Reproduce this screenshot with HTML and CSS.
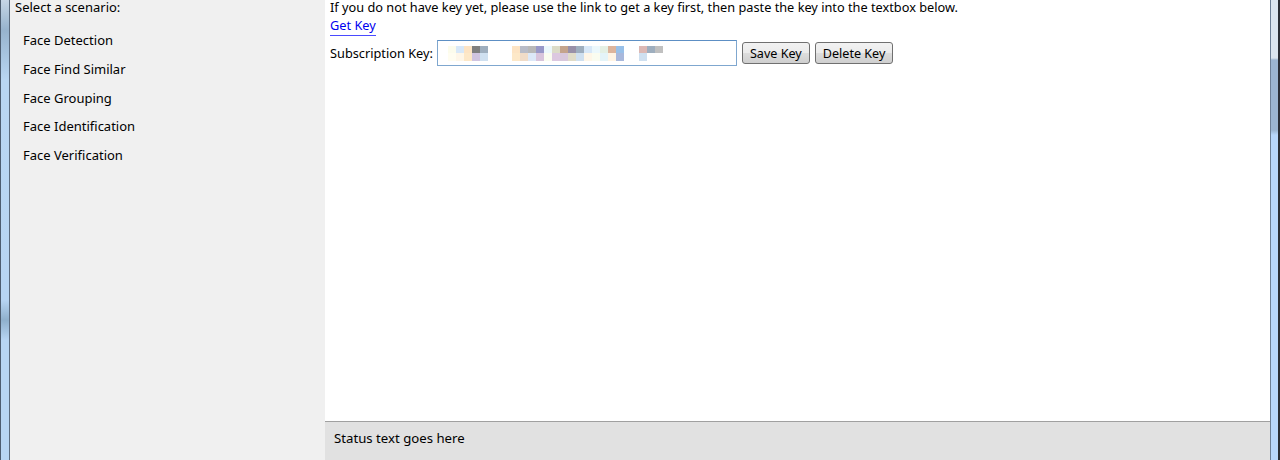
FILE: index.html
```html
<!DOCTYPE html>
<html>
<head>
<meta charset="utf-8">
<link rel="stylesheet" href="styles.css">
</head>
<body>
<div class="window">
  <div class="frame frame-left"></div>
  <aside class="sidebar">
    <div class="sidebar-title">Select a scenario:</div>
    <ul class="scenarios">
      <li>Face Detection</li>
      <li>Face Find Similar</li>
      <li>Face Grouping</li>
      <li>Face Identification</li>
      <li>Face Verification</li>
    </ul>
  </aside>
  <main class="main">
    <section class="content">
      <p class="intro">If you do not have key yet, please use the link to get a key first, then paste the key into the textbox below.</p>
      <a class="get-key" href="#">Get Key</a>
      <div class="key-row">
        <label class="key-label">Subscription Key:</label>
        <div class="key-box">
          <div class="blur">
            <span class="px c1"></span><span class="px c2"></span><span class="px c3"></span><span class="px c4"></span><span class="px c5"></span>
            <span class="gap"></span>
            <span class="px c3"></span><span class="px c6"></span><span class="px c7"></span><span class="px c8"></span><span class="px c9"></span><span class="px c10"></span><span class="px c11"></span><span class="px c12"></span><span class="px c5"></span><span class="px c2"></span><span class="px c9"></span><span class="px c13"></span><span class="px c14"></span><span class="px c15"></span>
            <span class="gap2"></span>
            <span class="px c16"></span><span class="px c5b"></span><span class="px c17"></span>
          </div>
        </div>
        <button class="btn">Save Key</button>
        <button class="btn">Delete Key</button>
      </div>
    </section>
    <footer class="status">Status text goes here</footer>
  </main>
  <div class="frame frame-right"></div>
</div>
</body>
</html>
```

FILE: styles.css
```css
html, body {
  margin: 0;
  padding: 0;
  height: 460px;
  overflow: hidden;
}
body {
  font-family: "Noto Sans", "DejaVu Sans", sans-serif;
  font-size: 13px;
  color: #000;
}
.window {
  display: flex;
  height: 460px;
  width: 1280px;
}
.frame {
  flex: none;
}
.frame-left {
  width: 8px;
  border-left: 1px solid #4d5d70;
  border-right: 1px solid #5b6b7e;
  background: linear-gradient(to bottom, #c6d6e6 0px, #97b3cd 30px, #b9d6f2 80px, #b7d5f3 300px, #8fb0cc 320px, #b7d5f3 340px, #b7d5f3 460px);
}
.frame-right {
  width: 7px;
  border-left: 1px solid #6d8096;
  border-right: 2px solid #2a2f36;
  background: linear-gradient(to bottom, #dbe6f0 0px, #dbe6f0 58px, #9bb5d0 60px, #9bb5d0 130px, #b7d7fb 135px, #b7d7fb 460px);
}
.sidebar {
  flex: none;
  width: 315px;
  background: #f0f0f0;
  padding: 0 0 0 5px;
  box-sizing: border-box;
}
.sidebar-title {
  margin-top: 0;
  line-height: 14px;
  font-size: 13px;
}
.scenarios {
  list-style: none;
  margin: 0;
  padding: 18px 0 0 8px;
}
.scenarios li {
  font-size: 13px;
  line-height: 17px;
  height: 28.75px;
}
.main {
  flex: 1;
  display: flex;
  flex-direction: column;
  background: #fff;
}
.content {
  flex: 1;
  padding: 0 5px;
}
.intro {
  margin: 0;
  font-size: 12.75px;
  line-height: 15px;
}
.get-key {
  display: inline-block;
  color: #0000f0;
  text-decoration: none;
  font-size: 12.75px;
  line-height: 16px;
  margin-top: 2px;
  padding-bottom: 2px;
  border-bottom: 1px solid #4a4aff;
}
.key-row {
  display: flex;
  align-items: center;
  margin-top: 4px;
}
.key-label {
  font-size: 12.75px;
  margin-right: 4px;
}
.key-box {
  width: 298px;
  height: 24px;
  border: 1px solid #7fa7cf;
  border-top-color: #5d8fc4;
  background: #fff;
  display: flex;
  align-items: center;
  margin-right: 5px;
}
.blur {
  display: flex;
  margin-left: 10px;
}
.px {
  width: 8px;
  height: 15px;
}
.gap { width: 24px; }
.gap2 { width: 15px; }
.c1 { background: linear-gradient(#fcfcec 50%, #fffdf0 50%); }
.c2 { background: linear-gradient(#d8e8f8 50%, #fef6e8 50%); }
.c3 { background: linear-gradient(#fde4c4 50%, #fde8c8 50%); }
.c4 { background: linear-gradient(#7f7f7f 50%, #d0c4e0 50%); }
.c5 { background: linear-gradient(#9eaebe 50%, #cfe0f0 50%); }
.c5b { background: linear-gradient(#9eaebe 50%, #fff 50%); }
.c6 { background: linear-gradient(#b8bcc8 50%, #f0dcc8 50%); }
.c7 { background: linear-gradient(#b8b8b8 50%, #dce8f8 50%); }
.c8 { background: linear-gradient(#9898c8 50%, #d8c4dc 50%); }
.c9 { background: linear-gradient(#ecf8fc 50%, #fafcf0 50%); }
.c10 { background: linear-gradient(#dcdcc8 50%, #dcc8e0 50%); }
.c11 { background: linear-gradient(#c4a48c 50%, #d8c8dc 50%); }
.c12 { background: linear-gradient(#9890a8 50%, #e0dcc8 50%); }
.c13 { background: linear-gradient(#e4f0e4 50%, #e4f4f8 50%); }
.c14 { background: linear-gradient(#dcb49c 50%, #fff4e4 50%); }
.c15 { background: linear-gradient(#98c0e8 50%, #a8b8dc 50%); }
.c16 { background: linear-gradient(#dcb8b4 50%, #cfe0f0 50%); }
.c17 { background: linear-gradient(#c0c0c0 50%, #fff 50%); }
.btn {
  font-family: inherit;
  font-size: 12.6px;
  height: 22px;
  padding: 0 7px;
  margin-right: 5px;
  border: 1px solid #707070;
  border-radius: 3px;
  background: linear-gradient(#f2f2f2 0%, #ebebeb 50%, #dddddd 51%, #cfcfcf 100%);
  color: #000;
}
.status {
  flex: none;
  height: 38px;
  border-top: 1px solid #a0a0a0;
  background: #e1e1e1;
  font-size: 13.2px;
  line-height: 33px;
  padding-left: 9px;
}
```
